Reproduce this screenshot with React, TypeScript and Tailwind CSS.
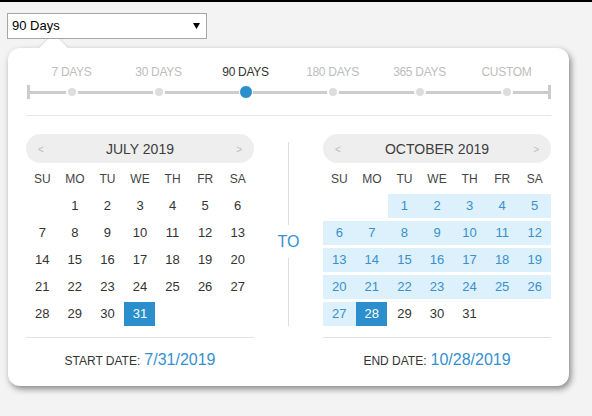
import React from "react";

const FONT = "font-['Liberation_Sans',Arial,sans-serif]";
const BLUE = "text-[#3590d0]";

type Month = { name: string; offset: number; days: number; range: number[]; sel: number };

const JULY: Month = { name: "JULY 2019", offset: 1, days: 31, range: [], sel: 31 };
const OCT: Month = {
  name: "OCTOBER 2019",
  offset: 2,
  days: 31,
  range: Array.from({ length: 27 }, (_, i) => i + 1),
  sel: 28,
};

const DAYS = ["SU", "MO", "TU", "WE", "TH", "FR", "SA"];
const PRESETS = ["7 DAYS", "30 DAYS", "90 DAYS", "180 DAYS", "365 DAYS", "CUSTOM"];

function Calendar({ m, label, value }: { m: Month; label: string; value: string }) {
  const cells: (number | null)[] = [];
  for (let i = 0; i < m.offset; i++) cells.push(null);
  for (let d = 1; d <= m.days; d++) cells.push(d);
  return (
    <div className="w-[228px] flex flex-col">
      <div className="h-[29px] rounded-full bg-[#eeeeee] flex items-center justify-between px-[12px] pt-[2px]">
        <span className="text-[10px] text-[#bbbbbb]">&lt;</span>
        <span className="text-[14px] text-[#3d3d3d]">{m.name}</span>
        <span className="text-[10px] text-[#bbbbbb]">&gt;</span>
      </div>
      <div className="h-[31px] grid grid-cols-7 items-center text-center text-[12px] text-[#444]">
        {DAYS.map((d) => (
          <span key={d}>{d}</span>
        ))}
      </div>
      <div className="grid grid-cols-7 gap-y-[3px] text-[13px]">
        {cells.map((d, i) => {
          if (d === null) return <div key={i} className="h-[24px]" />;
          if (d === m.sel)
            return (
              <div key={i} className="h-[24px] flex justify-center">
                <div className="w-[31px] h-[24px] bg-[#2a8fcc] text-white flex items-center justify-center">{d}</div>
              </div>
            );
          if (m.range.includes(d))
            return (
              <div key={i} className="h-[24px] bg-[#dcf1fb] text-[#3a8fcc] flex items-center justify-center">
                {d}
              </div>
            );
          return (
            <div key={i} className="h-[24px] text-[#333] flex items-center justify-center">
              {d}
            </div>
          );
        })}
      </div>
      <div className="mt-[11px] h-px bg-[#e2e2e2]" />
      <div className="h-[43px] flex items-center justify-center">
        <div className="flex items-baseline">
          <span className="text-[12px] text-[#333]">{label}</span>
          <span className={`ml-[4px] text-[16px] ${BLUE}`}>{value}</span>
        </div>
      </div>
    </div>
  );
}

export default function App() {
  return (
    <div className={`w-[592px] h-[416px] bg-[#f3f3f3] border-t-2 border-black overflow-hidden ${FONT}`}>
      <div className="pt-[11px] pl-[7px] relative z-10">
        <div className="w-[200px] h-[26px] border border-[#a6a6a6] bg-white flex items-center justify-between pl-[4px] pr-[6px]">
          <span className="text-[13px] text-black">90 Days</span>
          <svg width="7" height="6" viewBox="0 0 7 6">
            <path d="M0 0 H7 L3.5 6 Z" fill="#000" />
          </svg>
        </div>
      </div>
      <div className="relative ml-[8px] mt-[9px] w-[561px] h-[338px] bg-white rounded-[12px] shadow-[2px_3px_6px_rgba(0,0,0,0.45)] pl-[18px] pr-[18px] pt-[17px]">
        <div className="absolute left-[35px] top-[-10px] w-[21px] h-[21px] bg-white rotate-45 shadow-[-1px_-1px_2px_rgba(0,0,0,0.08)]" />
        <div className="relative ml-[1px] w-[524px]">
          <div className="w-[522px] mx-auto grid grid-cols-6 text-center text-[12px] tracking-[-0.3px] leading-[14px]">
            {PRESETS.map((p) => (
              <span key={p} className={p === "90 DAYS" ? "text-[#333]" : "text-[#bdbdbd]"}>
                {p}
              </span>
            ))}
          </div>
          <div className="relative mt-[6px] h-[14px]">
            <div className="absolute left-0 right-0 top-[6px] h-[3px] bg-[#cccccc]" />
            <div className="absolute left-0 top-0 w-[3px] h-[14px] bg-[#cccccc]" />
            <div className="absolute right-0 top-0 w-[3px] h-[14px] bg-[#cccccc]" />
            <div className="relative w-[522px] mx-auto grid grid-cols-6 h-[14px]">
              {PRESETS.map((p) => (
                <div key={p} className="flex items-center justify-center">
                  {p === "90 DAYS" ? (
                    <div className="w-[14px] h-[14px] rounded-full bg-[#2a8fcc] border border-white" />
                  ) : (
                    <div className="w-[12px] h-[12px] rounded-full bg-[#dddddd] border-2 border-white" />
                  )}
                </div>
              ))}
            </div>
          </div>
        </div>
        <div className="mt-[16px] w-[525px] h-px bg-[#e6e6e6]" />
        <div className="mt-[18px] flex">
          <Calendar m={JULY} label="START DATE:" value="7/31/2019" />
          <div className="w-[69px] flex flex-col items-center pt-[8px] h-[192px]">
            <div className="w-px h-[83px] bg-[#dddddd]" />
            <div className={`h-[33px] flex items-center text-[16px] ${BLUE}`}>TO</div>
            <div className="w-px flex-1 bg-[#dddddd]" />
          </div>
          <Calendar m={OCT} label="END DATE:" value="10/28/2019" />
        </div>
      </div>
    </div>
  );
}
